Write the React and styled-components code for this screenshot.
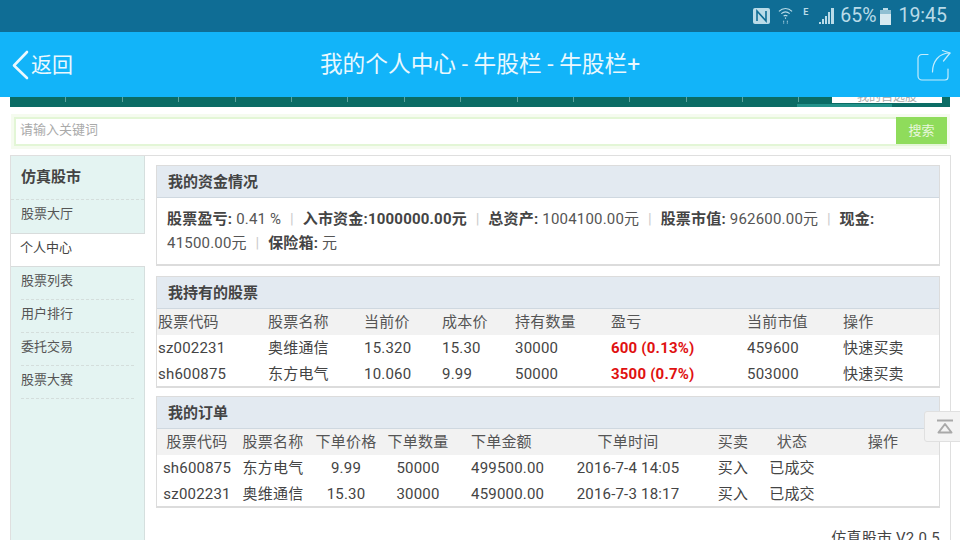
import React from "react";
import styled, { createGlobalStyle } from "styled-components";

const Global = createGlobalStyle`
  html, body { margin: 0; padding: 0; background: #fff; }
  body { width: 960px; height: 540px; overflow: hidden; font-family: Roboto, "Noto Sans CJK SC", sans-serif; color: #444; }
  * { box-sizing: border-box; }
`;

const Page = styled.div`position: relative; width: 960px; height: 540px; overflow: hidden; display: flex; flex-direction: column;`;

const StatusBar = styled.div`
  height: 32px; flex: none; background: #0f6d95; color: #b9dbe8; display: flex; align-items: center; justify-content: flex-end;
  padding-right: 13px; font-size: 19.5px; line-height: 32px;
`;
const StatusIcons = styled.div`display: flex; align-items: center;`;
const StatusText = styled.span`margin-left: ${p => p.$gap}px; display: flex; align-items: center;`;

const NavBar = styled.div`
  height: 65px; flex: none; background: #12b4f9; color: #eaf8fe; display: flex; align-items: center; justify-content: space-between; padding: 0 9px 0 11px; position: relative;
`;
const Back = styled.div`display: flex; align-items: center; gap: 1px; font-size: 21px; line-height: 28px;`;
const NavTitle = styled.div`position: absolute; left: 0; right: 0; text-align: center; font-size: 22.7px; line-height: 28px; pointer-events: none;`;

const Strip = styled.div`
  position: relative; height: 10px; flex: none; margin: 0 10px; background: #0b6c65; display: flex; overflow: hidden;
`;
const Tick = styled.div`width: 56.4px; height: 5px; flex: none; border-right: 1px solid #5da39e;`;
const StripTab = styled.div`position: absolute; left: 822px; top: 0; width: 110px; height: 6px; background: #fff; color: #aaa; font-size: 12px; line-height: 1px; text-align: center;`;
const StripBar = styled.div`position: absolute; left: 787px; bottom: 0; width: 95px; height: 3px; background: #23928a;`;
const StripEdge = styled.div`position: absolute; right: 0; top: 0; bottom: 3px; width: 8px; background: #0b6c65;`;

const SearchRow = styled.div`
  flex: none; height: 29px; margin: 10px 13px 0 14px; display: flex; border: 2px solid #e3f6d6; background: #fff; box-shadow: 0 0 0 3px #f5fbef;
`;
const SearchInput = styled.div`flex: 1; font-size: 13px; line-height: 22px; padding-left: 4px; color: #aaa;`;
const SearchBtn = styled.div`width: 51px; height: 27px; margin: -2px -2px 0 0; background: #8fdc5b; color: #e8f7dc; font-size: 13px; line-height: 27px; text-align: center;`;

const Main = styled.div`
  flex: 1; min-height: 0; margin: 9px 9px 0 10px; border: 1px solid #dfdfdf; border-bottom: 0; display: flex; overflow: hidden; background: #fff;
`;
const Side = styled.div`width: 134px; flex: none; background: #e4f4f2; border-right: 1px solid #d5dfde; padding-top: 1px;`;
const SideHead = styled.div`height: 43px; padding-left: 10px; font-size: 15px; font-weight: 700; line-height: 41px; color: #444; border-bottom: 1px dashed #d4dedc;`;
const SideItem = styled.div`
  height: ${p => p.$h || 33}px; padding-left: 10px; font-size: 13px; line-height: 28px; color: #555;
  ${p => p.$active ? "background:#fff; margin-right:-1px; position:relative; border-top:1px solid #d8dcdc; border-bottom:1px solid #d8dcdc; line-height:28px; color:#444; padding-left:9px;" : ""}
  ${p => p.$dashed ? "border-bottom:1px dashed #d4dedc; margin-right:10px; margin-left:10px; padding-left:0; line-height:28.500px;" : ""}
`;
const Content = styled.div`flex: 1; min-width: 0; padding: 9px 10px 0 11px; display: flex; flex-direction: column;`;

const Panel = styled.section`border: 1px solid #dcdcdc; border-bottom-width: 2px; margin-bottom: ${p => p.$mb}px; background: #fff;`;
const PanelHead = styled.h3`
  margin: 0; height: 32px; background: #e3eaf1; border-bottom: 1px solid #cfd8e0; padding-left: 11px; font-size: 15px; font-weight: 700; line-height: 33px; color: #444;
`;
const Summary = styled.div`padding: 9px 10px 9px 10px; font-size: 15px; line-height: 24px; color: #555; letter-spacing: 0.2px;`;
const B = styled.b`font-weight: 700; color: #444;`;
const Sep = styled.span`color: #ccc; margin: 0 8.750px;`;

const Row = styled.div`
  display: grid; grid-template-columns: ${p => p.$cols}; height: ${p => p.$head ? 26 : 25.5}px; line-height: 27px; font-size: 15px; letter-spacing: 0.2px; color: #444;
  ${p => p.$head ? "background:#f2f2f2; color:#555;" : ""}
`;
const Cell = styled.div`white-space: nowrap; padding-left: ${p => p.$center ? 0 : 1}px; text-align: ${p => p.$center ? "center" : "left"};`;
const Loss = styled.span`color: #e01010; font-weight: 700;`;

const Version = styled.div`text-align: right; font-size: 15px; line-height: 20px; margin-top: 20px; letter-spacing: 0.2px; color: #444;`;

const ToTop = styled.div`
  position: absolute; left: 924px; top: 411px; width: 40px; height: 31px; background: #f3f3f3; border: 1px solid #e0e0e0; border-radius: 3px; display: flex; align-items: center; padding-left: 12px;
`;

const EMark = styled.span`font-size: 9px; font-weight: 700; margin: 0 11px 8px 10px; line-height: 10px;`;

const stockCols = "110px 96px 78px 73px 96px 136px 96px 1fr";
const orderCols = "80px 72px 74px 70px 94px 162px 48px 70px 1fr";

const stocks = [
  ["sz002231", "奥维通信", "15.320", "15.30", "30000", "600 (0.13%)", "459600", "快速买卖"],
  ["sh600875", "东方电气", "10.060", "9.99", "50000", "3500 (0.7%)", "503000", "快速买卖"],
];
const orders = [
  ["sh600875", "东方电气", "9.99", "50000", "499500.00", "2016-7-4 14:05", "买入", "已成交", ""],
  ["sz002231", "奥维通信", "15.30", "30000", "459000.00", "2016-7-3 18:17", "买入", "已成交", ""],
];
const ticks = Array.from({ length: 14 });
const AMOUNT = 4;

const AmountCell = styled(Cell)`text-align: left; padding-left: 18px;`;

const NfcIcon = () => (
  <svg width="17" height="16" viewBox="0 0 17 16" fill="none">
    <rect x="0" y="0" width="17" height="16" rx="2" fill="#b9dbe8" />
    <path d="M4 13V3l9 10V3" stroke="#0f6d95" strokeWidth="1.6" fill="none" />
  </svg>
);
const WifiIcon = () => (
  <svg width="15" height="18" viewBox="0 0 16 18" fill="none" stroke="#b9dbe8" strokeWidth="1.2">
    <path d="M1 4c4-4 10-4 14 0" /><path d="M3.500 6.500c3-2.600 6-2.600 9 0" /><path d="M6 9c1.500-1 2.500-1 4 0" />
    <path d="M8 10.500v1.500" /><path d="M6 14v3M10 14v3" strokeDasharray="1 1" />
  </svg>
);
const SignalIcon = () => (
  <svg width="15" height="17" viewBox="0 0 15 17" fill="#b9dbe8">
    <rect x="0" y="14" width="2" height="2" /><rect x="3" y="11" width="2" height="5" /><rect x="6" y="8" width="2" height="8" />
    <rect x="9" y="4" width="2" height="12" /><rect x="12" y="0" width="3" height="16" />
  </svg>
);
const BatteryIcon = () => (
  <svg width="11" height="17" viewBox="0 0 11 17">
    <rect x="3" y="0" width="5" height="2" fill="#b9dbe8" /><rect x="0" y="2" width="11" height="15" fill="#d6e9f0" />
    <rect x="0" y="2" width="11" height="4" fill="#8fbfd2" />
  </svg>
);
const Chevron = () => (
  <svg width="19" height="30" viewBox="0 0 19 30" fill="none" stroke="#eaf8fe" strokeWidth="2.6" strokeLinecap="round" strokeLinejoin="round">
    <path d="M16 2 3 15.500 16 28" />
  </svg>
);
const ShareIcon = () => (
  <svg width="34" height="32" viewBox="0 0 34 32" fill="none" stroke="#c4ecfc" strokeWidth="1.200" strokeLinecap="round" strokeLinejoin="round">
    <path d="M11 5.500H5a4 4 0 0 0-4 4V27a4 4 0 0 0 4 4h23a3 3 0 0 0 3-3V20" />
    <path d="M15.500 23c0-10 6-19 17.500-19" /><path d="M25.500 1.500 33 4l-6.500 8" />
  </svg>
);
const TopIcon = () => (
  <svg width="16" height="15" viewBox="0 0 16 15" fill="none" stroke="#a9a9a9" strokeWidth="2">
    <path d="M0 1.500h16" /><path d="M8 5 1.500 13.500h13z" strokeLinejoin="round" />
  </svg>
);

export default function App() {
  return (
    <Page>
      <Global />
      <StatusBar>
        <StatusIcons>
          <NfcIcon />
          <StatusText $gap={8}><WifiIcon /></StatusText>
          <EMark>E</EMark>
          <SignalIcon />
          <StatusText $gap={6}>65%</StatusText>
          <StatusText $gap={4}><BatteryIcon /></StatusText>
          <StatusText $gap={7}>19:45</StatusText>
        </StatusIcons>
      </StatusBar>
      <NavBar>
        <Back><Chevron />返回</Back>
        <NavTitle>我的个人中心 - 牛股栏 - 牛股栏+</NavTitle>
        <ShareIcon />
      </NavBar>
      <Strip>
        {ticks.map((_, i) => <Tick key={i} />)}
        <StripEdge />
        <StripBar />
        <StripTab>我的自选股</StripTab>
      </Strip>
      <SearchRow>
        <SearchInput>请输入关键词</SearchInput>
        <SearchBtn>搜索</SearchBtn>
      </SearchRow>
      <Main>
        <Side>
          <SideHead>仿真股市</SideHead>
          <SideItem>股票大厅</SideItem>
          <SideItem $active $h={34}>个人中心</SideItem>
          <SideItem $dashed>股票列表</SideItem>
          <SideItem $dashed>用户排行</SideItem>
          <SideItem $dashed>委托交易</SideItem>
          <SideItem $dashed>股票大赛</SideItem>
        </Side>
        <Content>
          <Panel $mb={10}>
            <PanelHead>我的资金情况</PanelHead>
            <Summary>
              <B>股票盈亏:</B> 0.41 %<Sep>|</Sep><B>入市资金:1000000.00元</B><Sep>|</Sep><B>总资产:</B> 1004100.00元<Sep>|</Sep><B>股票市值:</B> 962600.00元<Sep>|</Sep><B>现金:</B> 41500.00元<Sep>|</Sep><B>保险箱:</B> 元
            </Summary>
          </Panel>
          <Panel $mb={8}>
            <PanelHead>我持有的股票</PanelHead>
            <Row $head $cols={stockCols}>
              {["股票代码", "股票名称", "当前价", "成本价", "持有数量", "盈亏", "当前市值", "操作"].map(h => <Cell key={h}>{h}</Cell>)}
            </Row>
            {stocks.map(r => (
              <Row key={r[0]} $cols={stockCols}>
                {r.map((c, i) => <Cell key={i}>{i === 5 ? <Loss>{c}</Loss> : c}</Cell>)}
              </Row>
            ))}
          </Panel>
          <Panel $mb={0}>
            <PanelHead>我的订单</PanelHead>
            <Row $head $cols={orderCols}>
              {["股票代码", "股票名称", "下单价格", "下单数量", "下单金额", "下单时间", "买卖", "状态", "操作"].map((h, i) =>
                i === AMOUNT ? <AmountCell key={h}>{h}</AmountCell> : <Cell key={h} $center>{h}</Cell>)}
            </Row>
            {orders.map(r => (
              <Row key={r[0]} $cols={orderCols}>
                {r.map((c, i) => i === AMOUNT ? <AmountCell key={i}>{c}</AmountCell> : <Cell key={i} $center>{c}</Cell>)}
              </Row>
            ))}
          </Panel>
          <Version>仿真股市 V2.0.5</Version>
        </Content>
      </Main>
      <ToTop><TopIcon /></ToTop>
    </Page>
  );
}
